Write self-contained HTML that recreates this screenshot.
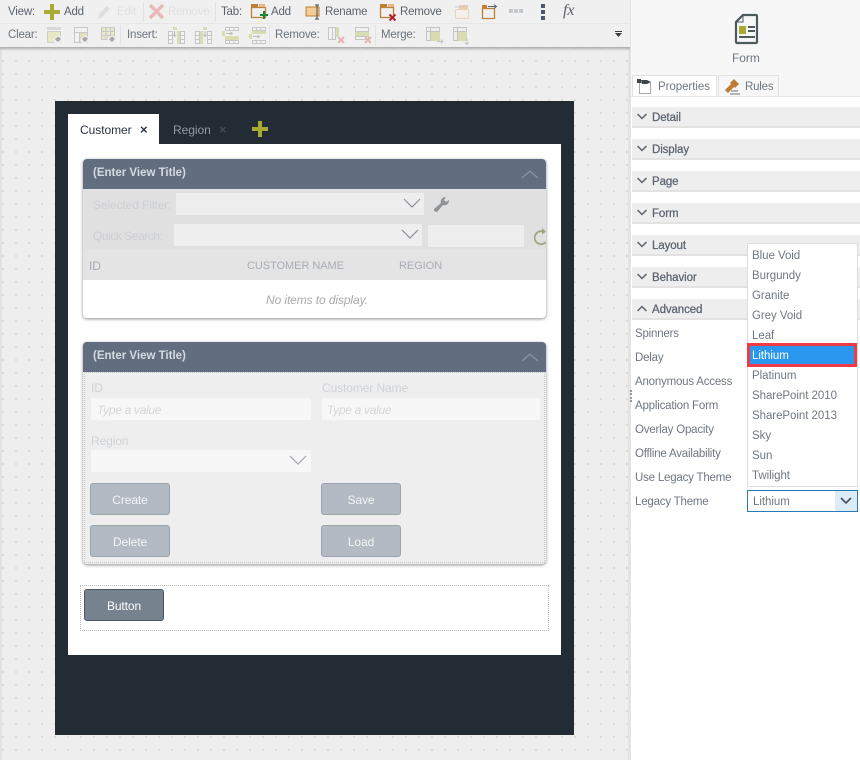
<!DOCTYPE html>
<html><head><meta charset="utf-8"><style>
html,body{margin:0;padding:0;width:860px;height:760px;overflow:hidden;background:#fff}
body{position:relative;font-family:"Liberation Sans",sans-serif;font-size:12px;color:#555}
div,span,svg{position:absolute;box-sizing:border-box}
.t{white-space:nowrap;line-height:16px;height:16px;letter-spacing:-.05px}
.tb{color:#5a6470;font-size:11.5px;letter-spacing:-.2px}
.dis{color:#e0e0e0}
.lab{color:#6f7782;font-size:11.5px;letter-spacing:-.2px}
.sec{left:632px;width:228px;height:21px;background:#eee;border-bottom:2px solid #e2e2e2}
.sec span{left:20px;top:3px;color:#5a6470;font-size:11.5px;letter-spacing:-.1px;-webkit-text-stroke:.25px #5a6470;white-space:nowrap;line-height:16px}
.opt{left:752px;color:#707780;font-size:11.5px;letter-spacing:-.05px}
.btn{width:80px;height:32px;background:#b3bac4;border:1px solid #9ba3ae;border-radius:3px;color:#f4f5f6;text-align:center;line-height:32px;font-size:12px;letter-spacing:-.1px}
.hd{left:83px;width:463px;height:30px;background:#626e7f;border-radius:4px 4px 0 0}
.hd span{left:10px;top:6px;color:#d5dae0;font-weight:bold;font-size:11.5px;white-space:nowrap;line-height:16px}
.inp{background:#eee}
.inp2{background:#f7f7f7}
.ph{color:#d6d6d6;font-style:italic;font-size:12px;letter-spacing:-.3px}
.fl{color:#cfd2d6;font-size:12px;letter-spacing:-.1px}
.gh{color:#a8adb4;font-size:11px}
</style></head><body>

<!-- toolbar -->
<div style="left:0;top:0;width:630px;height:47px;background:#f0f0f0"></div>
<div style="left:0;top:23px;width:630px;height:1px;background:#e6e6e6"></div>

<div class="t tb" style="left:8px;top:4px">View:</div>
<svg style="left:44px;top:4px" width="17" height="17"><path d="M6 0h4v6h6v4h-6v6H6v-6H0V6h6z" fill="#a9aa35"/></svg>
<div class="t tb" style="left:64px;top:4px">Add</div>
<svg style="left:97px;top:4px" width="16" height="16"><path d="M1 15l1-5 8-8 3 3-8 8z" fill="#dedede"/></svg>
<div class="t tb dis" style="left:117px;top:4px">Edit</div>
<div style="left:143px;top:2px;width:1px;height:20px;background:#e2e2e2"></div>
<svg style="left:148px;top:3px" width="17" height="17"><path d="M2 2l13 13M15 2L2 15" stroke="#eab8b8" stroke-width="3.4"/></svg>
<div class="t tb dis" style="left:168px;top:4px">Remove</div>
<div style="left:215px;top:2px;width:1px;height:20px;background:#e2e2e2"></div>
<div class="t tb" style="left:221px;top:4px">Tab:</div>
<svg style="left:250px;top:3px" width="18" height="18"><path d="M1.500 4.500h14v10h-14z" fill="none" stroke="#c17f35" stroke-width="1.300"/><path d="M1 1h7v4H1z" fill="#c17f35"/><path d="M9 1h6v3H9z" fill="#e5b98a"/><path d="M11 11h2v-3h2v3h3v2h-3v3h-2v-3h-3v-2z" fill="#0f8c3c"/></svg>
<div class="t tb" style="left:271px;top:4px">Add</div>
<svg style="left:305px;top:4px" width="17" height="16"><path d="M1 3h13v9H1z" fill="#f3cc96" stroke="#c17f35"/><path d="M10 1h4M12 1v14M10 15h4" stroke="#444" stroke-width="1" fill="none"/></svg>
<div class="t tb" style="left:325px;top:4px">Rename</div>
<svg style="left:379px;top:3px" width="19" height="19"><path d="M1.500 4.500h13v10h-13z" fill="none" stroke="#c17f35" stroke-width="1.300"/><path d="M1 1h7v4H1z" fill="#c17f35"/><path d="M9 1h6v3H9z" fill="#e5b98a"/><path d="M10.500 11.500l6 6M16.500 11.500l-6 6" stroke="#b3202c" stroke-width="2"/></svg>
<div class="t tb" style="left:400px;top:4px">Remove</div>
<svg style="left:454px;top:4px" width="16" height="16"><path d="M1.500 5.500h13v9h-13z" fill="#f4f0e9" stroke="#e6d5c0"/><path d="M5 1h9v4H5z" fill="#e6cdb0"/><path d="M1 3h6" stroke="#ccc"/></svg>
<svg style="left:481px;top:4px" width="17" height="16"><path d="M1.500 4.500h12v10h-12z" fill="none" stroke="#c17f35" stroke-width="1.300"/><path d="M1 1h5v4H1z" fill="#c17f35"/><path d="M7 2.500h8M13 .5l2.500 2-2.500 2" fill="none" stroke="#5a6470"/></svg>
<svg style="left:509px;top:9px" width="15" height="5"><path d="M0 0h4v4H0zM5 0h4v4H5zM10 0h4v4h-4z" fill="#c4c7cc"/></svg>
<svg style="left:541px;top:4px" width="4" height="16"><path d="M0 0h4v4H0zM0 6h4v4H0zM0 12h4v4H0z" fill="#4d5765"/></svg>
<div class="t" style="left:563px;top:3px;font-family:'Liberation Serif',serif;font-style:italic;font-weight:normal;font-size:16px;color:#5f6266">fx</div>

<div class="t tb" style="left:8px;top:27px;color:#6a7480">Clear:</div>
<!-- clear icons -->
<svg style="left:46px;top:26px" width="18" height="18"><path d="M1 1h14v3H1z" fill="#d8d8d8"/><path d="M1.500 5.500h13v11h-13z" fill="#e6e7c3" stroke="#cfcfcf"/><path d="M7 14l5-5 5 3-3 5H9z" fill="#f0f0f0"/><path d="M9 13l3-2.500 3 2-2 3h-2z" fill="#a8a8a8"/></svg>
<svg style="left:73px;top:26px" width="18" height="18"><path d="M1.500 1.500h13v15h-13z" fill="#f2f2f2" stroke="#c8c8c8"/><path d="M1.500 6.500h13M6.500 6.500v10" stroke="#c8c8c8"/><path d="M7 7h7v9H7z" fill="#e0e1b8"/><path d="M7 14l5-5 5 3-3 5H9z" fill="#f0f0f0"/><path d="M9 13l3-2.500 3 2-2 3h-2z" fill="#a8a8a8"/></svg>
<svg style="left:100px;top:26px" width="18" height="18"><path d="M1.500 1.500h13v12h-13z" fill="#e8e8ca" stroke="#c8c8c8"/><path d="M1 5.500h14M1 9.500h14M6 1v12M10.500 1v12" stroke="#c8c8c8"/><path d="M7 14l5-5 5 3-3 5H9z" fill="#f0f0f0"/><path d="M9 13l3-2.500 3 2-2 3h-2z" fill="#a8a8a8"/></svg>
<div style="left:120px;top:25px;width:1px;height:20px;background:#e2e2e2"></div>
<div class="t tb" style="left:127px;top:27px;color:#6a7480">Insert:</div>
<!-- insert columns/rows -->
<svg style="left:168px;top:27px" width="17" height="17"><path d="M.5 4.500h4v12h-4zM.5 8.500h4M.5 12.500h4M12.500 4.500h4v12h-4zM12.500 8.500h4M12.500 12.500h4" fill="#f2f2f2" stroke="#c6c6c6"/><path d="M5 0h4v3H5z" fill="#d9dcb0"/><path d="M9 4h3v13H9z" fill="#d9dcb0"/><path d="M6.500 4v5M5 7.500l1.500 2 1.500-2" fill="none" stroke="#bdbdbd"/></svg>
<svg style="left:195px;top:27px" width="17" height="17"><path d="M.5 4.500h4v12h-4zM.5 8.500h4M.5 12.500h4M12.500 4.500h4v12h-4zM12.500 8.500h4M12.500 12.500h4" fill="#f2f2f2" stroke="#c6c6c6"/><path d="M8 0h4v3H8z" fill="#d9dcb0"/><path d="M5 4h3v13H5z" fill="#d9dcb0"/><path d="M10 4v5M8.500 7.500l1.500 2 1.500-2" fill="none" stroke="#bdbdbd"/></svg>
<svg style="left:222px;top:27px" width="17" height="17"><path d="M3.500.500h13v3h-13zM7.500.500v3M12 .500v3M3.500 13.500h13v3h-13zM7.500 13.500v3M12 13.500v3" fill="#f2f2f2" stroke="#c6c6c6"/><path d="M0 4h3v5H0z" fill="#d9dcb0"/><path d="M3 9h14v4H3z" fill="#d9dcb0"/><path d="M4 6.500h6M8.500 5l2 1.500-2 1.500" fill="none" stroke="#bdbdbd"/></svg>
<svg style="left:249px;top:27px" width="17" height="17"><path d="M3.500.500h13v3h-13zM7.500.500v3M12 .500v3M3.500 13.500h13v3h-13zM7.500 13.500v3M12 13.500v3" fill="#f2f2f2" stroke="#c6c6c6"/><path d="M0 7h3v5H0z" fill="#d9dcb0"/><path d="M3 4h14v3H3z" fill="#d9dcb0"/><path d="M4 9.500h6M8.500 8l2 1.500-2 1.500" fill="none" stroke="#bdbdbd"/></svg>
<div style="left:269px;top:25px;width:1px;height:20px;background:#e2e2e2"></div>
<div class="t tb" style="left:275px;top:27px;color:#6a7480">Remove:</div>
<svg style="left:328px;top:27px" width="18" height="18"><path d="M.5.500h4v12h-4zM4.500.500h3v12h-3z" fill="#f2f2f2" stroke="#c6c6c6"/><path d="M8 0h3v10H8z" fill="#d9dcb0"/><path d="M10 10l6 6M16 10l-6 6" stroke="#e6b4b4" stroke-width="2"/></svg>
<svg style="left:355px;top:27px" width="18" height="18"><path d="M.5.500h13v4H.5zM.5 9.500h13v3H.5z" fill="#f2f2f2" stroke="#c6c6c6"/><path d="M0 5h14v4H0z" fill="#d9dcb0"/><path d="M10 10l6 6M16 10l-6 6" stroke="#e6b4b4" stroke-width="2"/></svg>
<div style="left:375px;top:25px;width:1px;height:20px;background:#e2e2e2"></div>
<div class="t tb" style="left:381px;top:27px;color:#6a7480">Merge:</div>
<svg style="left:426px;top:27px" width="18" height="18"><path d="M.5.500h13v13H.5z" fill="#eee" stroke="#c4c4c4"/><path d="M5 5h9v9H5z" fill="#d9dcb0"/><path d="M.5 4.500h13M4.500.500v13" stroke="#c4c4c4"/><path d="M11 14.500h6M15 12.500l2 2-2 2" fill="none" stroke="#c4c4c4"/></svg>
<svg style="left:453px;top:27px" width="18" height="18"><path d="M.5.500h13v13H.5z" fill="#eee" stroke="#c4c4c4"/><path d="M5 5h9v9H5z" fill="#d9dcb0"/><path d="M.5 4.500h13M4.500.500v13" stroke="#c4c4c4"/><path d="M14 11.500v6M12 15.500l2 2 2-2" fill="none" stroke="#c4c4c4"/></svg>
<svg style="left:614px;top:31px" width="9" height="7"><path d="M1 0h7v1H1zM1 2h7L4.500 6z" fill="#3c3c3c"/></svg>

<!-- canvas -->
<div style="left:0;top:47px;width:630px;height:713px;background-color:#eee;background-image:linear-gradient(to bottom,#dcdcdc 2px,transparent 2px);background-size:2px 13px;background-position:0 0;border-left:2px solid #e2e2e2;border-right:2px solid #e2e2e2"></div>
<div style="left:2px;top:47px;width:626px;height:713px;background-image:linear-gradient(to right,transparent 2px,#eee 2px);background-size:13px 13px"></div>
<div style="left:0;top:47px;width:630px;height:4px;background:linear-gradient(to bottom,#aaa,rgba(238,238,238,0))"></div>

<!-- form -->
<div style="left:55px;top:101px;width:519px;height:634px;background:#232c35"></div>
<div style="left:68px;top:144px;width:493px;height:511px;background:#fff"></div>
<div style="left:68px;top:114px;width:91px;height:30px;background:#fff"></div>
<div class="t" style="left:80px;top:122px;color:#2b3440;font-size:12px">Customer</div>
<div class="t" style="left:140px;top:122px;color:#2b3440;font-size:13px;font-weight:bold">×</div>
<div class="t" style="left:173px;top:122px;color:#929aa3;font-size:12px">Region</div>
<div class="t" style="left:219px;top:122px;color:#3e4954;font-size:13px;font-weight:bold">×</div>
<svg style="left:252px;top:121px" width="16" height="16"><path d="M6 0h4v6h6v4h-6v6H6v-6H0V6h6z" fill="#a9aa35"/></svg>

<!-- view 1 -->
<div style="left:83px;top:159px;width:463px;height:159px;border-radius:4px;background:#fff;box-shadow:0 1px 3px rgba(0,0,0,.45)"></div>
<div class="hd" style="top:159px"><span>(Enter View Title)</span></div>
<svg style="left:521px;top:169px" width="18" height="11"><path d="M1 9l8-7 8 7" fill="none" stroke="#8b95a2" stroke-width="1.200"/></svg>
<div style="left:83px;top:189px;width:463px;height:60px;background:#e0e0e0"></div>
<div class="t fl" style="left:93px;top:197px;color:#cdcfd2">Selected Filter:</div>
<div class="inp" style="left:176px;top:193px;width:248px;height:22px"></div>
<svg style="left:403px;top:198px" width="18" height="11"><path d="M1 1l8 8 8-8" fill="none" stroke="#8a8f95" stroke-width="1.200"/></svg>
<svg style="left:433px;top:196px" width="18" height="17"><path d="M1 13l7-6c-1-3 1-6 5-6l-2 3 2 2 3-2c0 4-3 6-6 5l-6 7-3-1z" fill="#8f9397"/></svg>
<div class="t fl" style="left:93px;top:228px;color:#cdcfd2;letter-spacing:-.45px">Quick Search:</div>
<div class="inp" style="left:174px;top:224px;width:248px;height:22px"></div>
<svg style="left:401px;top:229px" width="18" height="11"><path d="M1 1l8 8 8-8" fill="none" stroke="#8a8f95" stroke-width="1.200"/></svg>
<div class="inp" style="left:428px;top:225px;width:96px;height:22px"></div>
<svg style="left:534px;top:228px" width="12" height="18"><path d="M9 3.500A6.500 6.500 0 1 0 12 14" fill="none" stroke="#a2a87a" stroke-width="1.800"/><path d="M8 0l4 3.500-4 3z" fill="#a2a87a"/></svg>
<div style="left:83px;top:249px;width:463px;height:31px;background:#e4e4e4"></div>
<div class="t gh" style="left:89px;top:258px;font-size:12px">ID</div>
<div class="t gh" style="left:247px;top:258px">CUSTOMER NAME</div>
<div class="t gh" style="left:399px;top:258px">REGION</div>
<div class="t" style="left:266px;top:292px;color:#a9a9a9;font-size:12px;font-style:italic;letter-spacing:-.1px">No items to display.</div>

<!-- view 2 -->
<div style="left:83px;top:342px;width:463px;height:222px;border-radius:4px;background:#eee;box-shadow:0 1px 3px rgba(0,0,0,.45)"></div>
<div class="hd" style="top:342px"><span>(Enter View Title)</span></div>
<svg style="left:521px;top:352px" width="18" height="11"><path d="M1 9l8-7 8 7" fill="none" stroke="#8b95a2" stroke-width="1.200"/></svg>
<div style="left:84px;top:372px;width:461px;height:191px;border:1px dotted #c6c6c6"></div>
<div class="t fl" style="left:91px;top:380px">ID</div>
<div class="inp2" style="left:91px;top:398px;width:220px;height:22px"></div>
<div class="t ph" style="left:97px;top:402px">Type a value</div>
<div class="t fl" style="left:322px;top:380px">Customer Name</div>
<div class="inp2" style="left:322px;top:398px;width:218px;height:22px"></div>
<div class="t ph" style="left:327px;top:402px">Type a value</div>
<div class="t fl" style="left:91px;top:433px">Region</div>
<div class="inp2" style="left:91px;top:450px;width:220px;height:22px"></div>
<svg style="left:289px;top:455px" width="18" height="11"><path d="M1 1l8 8 8-8" fill="none" stroke="#a2a5a9" stroke-width="1.200"/></svg>
<div class="btn" style="left:90px;top:483px">Create</div>
<div class="btn" style="left:90px;top:525px">Delete</div>
<div class="btn" style="left:321px;top:483px">Save</div>
<div class="btn" style="left:321px;top:525px">Load</div>

<!-- button area -->
<div style="left:80px;top:585px;width:469px;height:46px;border:1px dotted #bcbcbc"></div>
<div class="btn" style="left:84px;top:589px;background:#77828f;border-color:#4a5663;color:#fff">Button</div>

<!-- right panel -->
<div style="left:630px;top:0;width:230px;height:760px;background:#fff;border-left:1px solid #e4e4e4"></div>
<div style="left:631px;top:0;width:229px;height:96px;background:#f7f7f7"></div>
<svg style="left:734px;top:13px" width="25" height="32"><path d="M9 2h13a1 1 0 0 1 1 1v26a1 1 0 0 1-1 1H3a1 1 0 0 1-1-1V9z" fill="none" stroke="#4e5a5c" stroke-width="2.200"/><path d="M9 2v7H2" fill="none" stroke="#4e5a5c" stroke-width="1"/><path d="M5 13h7v8H5z" fill="#a9aa35"/><path d="M14 13h7v2h-7zM14 17h7v2h-7zM5 23h16v2H5z" fill="#4e5a5c"/></svg>
<div class="t" style="left:732px;top:50px;color:#6f7782;font-size:12px">Form</div>

<div style="left:632px;top:75px;width:85px;height:22px;background:#fff;border:1px solid #e2e2e2;border-bottom:none"></div>
<svg style="left:636px;top:78px" width="18" height="17"><path d="M3.500 4.500h11v11h-11z" fill="#fff" stroke="#aaa"/><path d="M1 1h4v4H1z" fill="#3f4548"/><path d="M5 2h6l4 2-4 2H6z" fill="#3f4548"/></svg>
<div class="t" style="left:658px;top:79px;color:#6f7782;font-size:11.500px;letter-spacing:-.05px">Properties</div>
<div style="left:718px;top:75px;width:61px;height:22px;background:#f7f7f7;border:1px solid #e2e2e2"></div>
<svg style="left:724px;top:78px" width="18" height="17"><path d="M1 12l6-6-1-1 4-4 5 5-4 4-1-1-6 6z" fill="#bd7b34"/><path d="M7 12h7v2H7zM6 15h10v2H6z" fill="#b4b4b4"/></svg>
<div class="t" style="left:745px;top:79px;color:#6f7782;font-size:11.500px;letter-spacing:-.2px">Rules</div>
<div style="left:631px;top:96px;width:229px;height:1px;background:#e6e6e6"></div>

<div class="sec" style="top:107px"><span>Detail</span></div>
<div class="sec" style="top:139px"><span>Display</span></div>
<div class="sec" style="top:171px"><span>Page</span></div>
<div class="sec" style="top:203px"><span>Form</span></div>
<div class="sec" style="top:235px"><span>Layout</span></div>
<div class="sec" style="top:267px"><span>Behavior</span></div>
<div class="sec" style="top:299px"><span>Advanced</span></div>
<svg style="left:637px;top:113px" width="10" height="170"><g fill="none" stroke="#59636f" stroke-width="1.500"><path d="M.5 1l4.500 4.500L9.500 1"/><path d="M.5 33l4.500 4.500L9.500 33"/><path d="M.5 65l4.500 4.500L9.500 65"/><path d="M.5 97l4.500 4.500L9.500 97"/><path d="M.5 129l4.500 4.500L9.500 129"/><path d="M.5 161l4.500 4.500L9.500 161"/></g></svg>
<svg style="left:637px;top:305px" width="10" height="8"><path d="M.5 6l4.500-4.500L9.500 6" fill="none" stroke="#59636f" stroke-width="1.500"/></svg>

<div class="t lab" style="left:635px;top:326px">Spinners</div>
<div class="t lab" style="left:635px;top:350px">Delay</div>
<div class="t lab" style="left:635px;top:374px">Anonymous Access</div>
<div class="t lab" style="left:635px;top:398px">Application Form</div>
<div class="t lab" style="left:635px;top:422px">Overlay Opacity</div>
<div class="t lab" style="left:635px;top:446px">Offline Availability</div>
<div class="t lab" style="left:635px;top:470px">Use Legacy Theme</div>
<div class="t lab" style="left:635px;top:494px">Legacy Theme</div>
<div style="left:630px;top:390px;width:2px;height:12px;border-left:2px dotted #999"></div>

<div style="left:747px;top:243px;width:111px;height:244px;background:#fff;border:1px solid #ddd"></div>
<div class="t opt" style="top:248px">Blue Void</div>
<div class="t opt" style="top:268px">Burgundy</div>
<div class="t opt" style="top:288px">Granite</div>
<div class="t opt" style="top:308px">Grey Void</div>
<div class="t opt" style="top:328px">Leaf</div>
<div style="left:747px;top:343px;width:110px;height:24px;background:#2b98f0;border:3px solid #f03a46"></div>
<div class="t opt" style="top:348px;color:#fff">Lithium</div>
<div class="t opt" style="top:368px">Platinum</div>
<div class="t opt" style="top:388px">SharePoint 2010</div>
<div class="t opt" style="top:408px">SharePoint 2013</div>
<div class="t opt" style="top:428px">Sky</div>
<div class="t opt" style="top:448px">Sun</div>
<div class="t opt" style="top:468px">Twilight</div>

<div style="left:747px;top:490px;width:111px;height:22px;background:#fff;border:1px solid #2a7ab8"></div>
<div style="left:835px;top:491px;width:22px;height:20px;background:#dcebf8"></div>
<svg style="left:840px;top:497px" width="12" height="8"><path d="M1 1l5 5 5-5" fill="none" stroke="#4a5058" stroke-width="1.600"/></svg>
<div class="t opt" style="left:753px;top:494px">Lithium</div>
</body></html>
